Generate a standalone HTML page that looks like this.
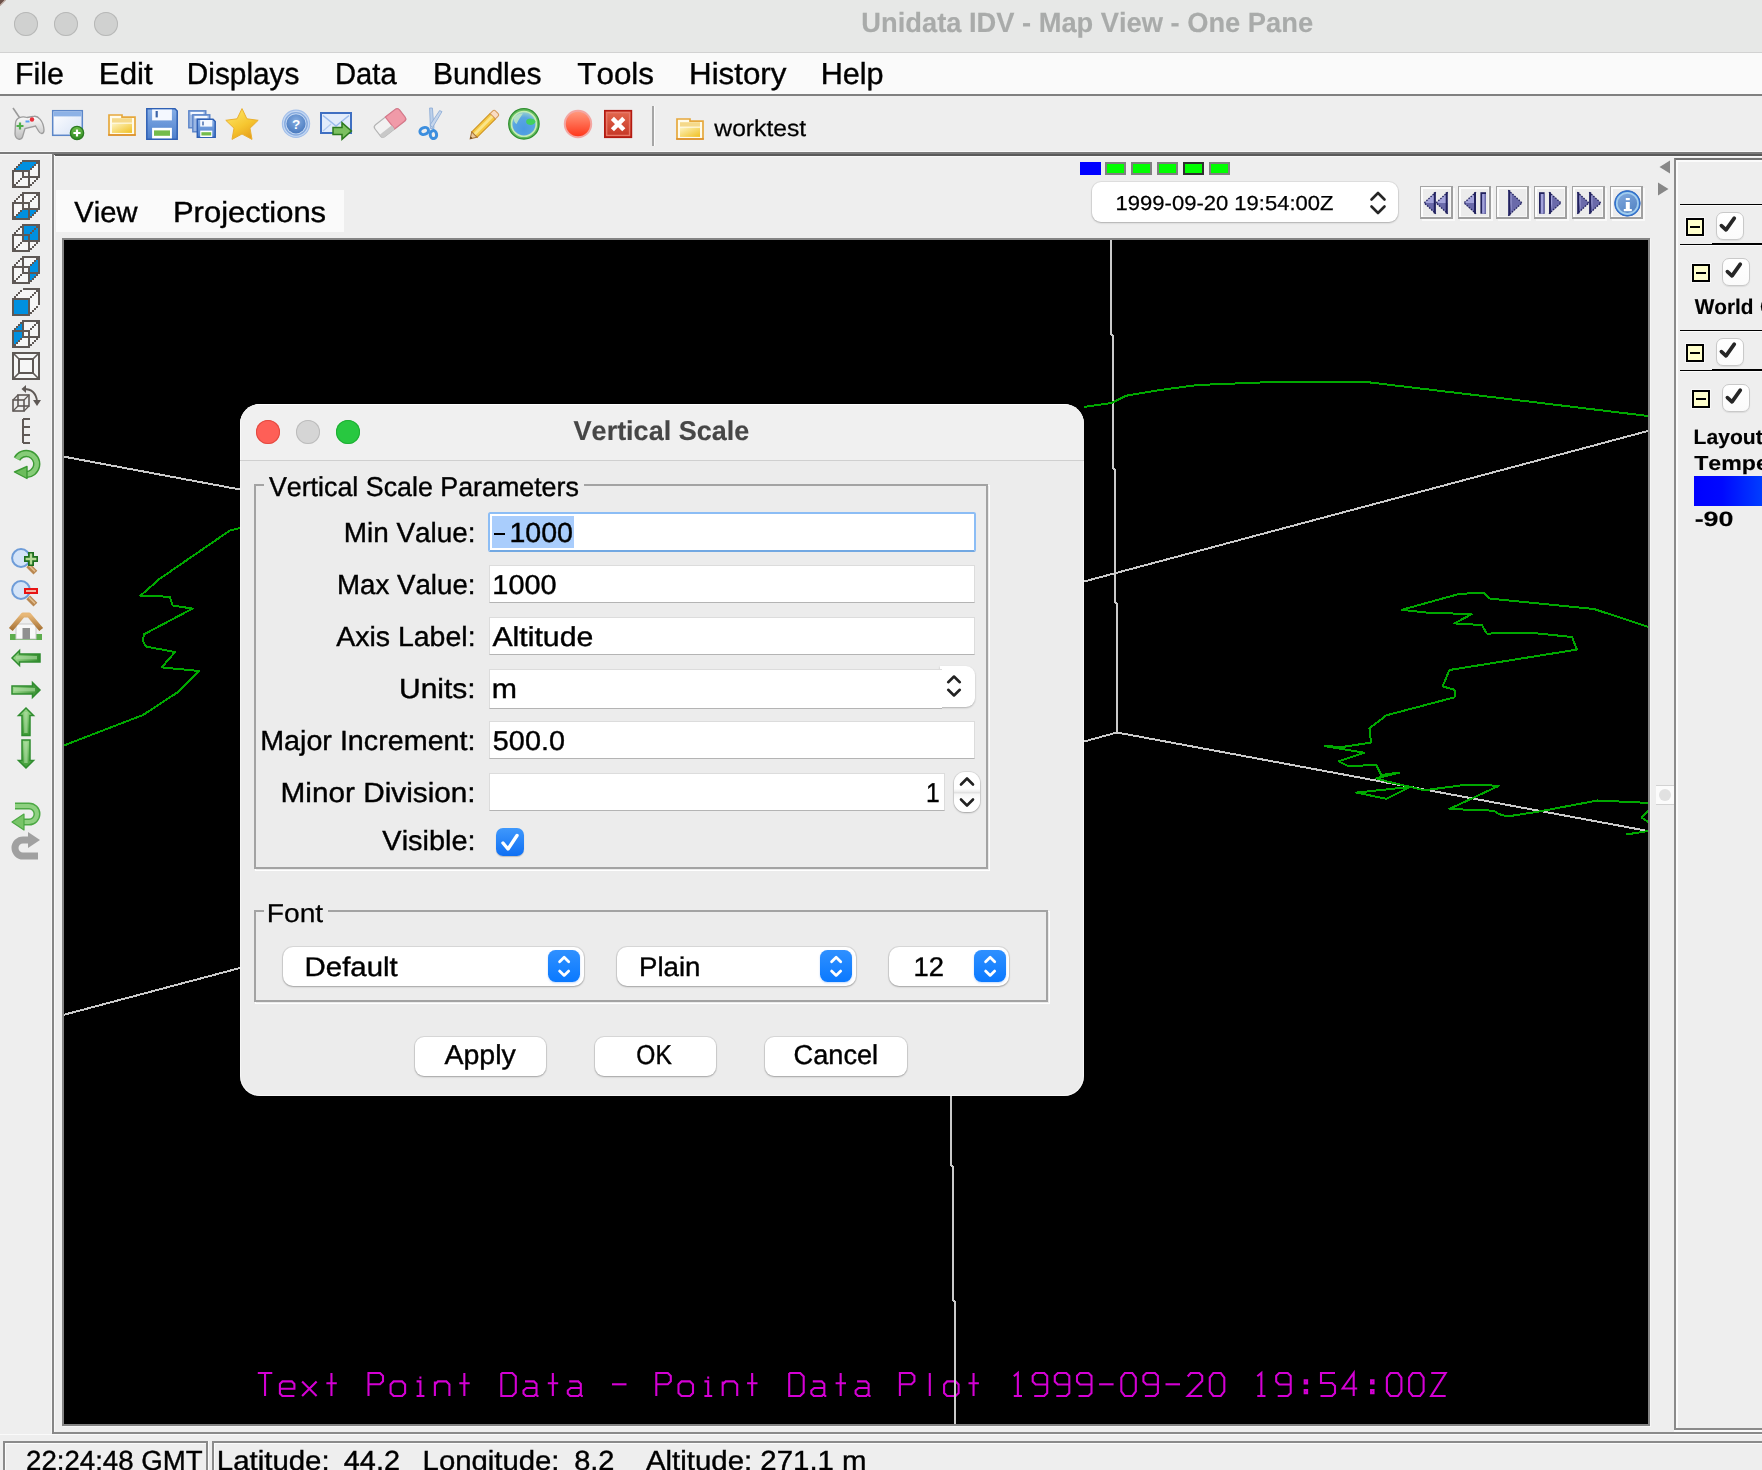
<!DOCTYPE html>
<html><head><meta charset="utf-8"><title>Unidata IDV</title><style>
html,body{margin:0;padding:0;}
body{width:1762px;height:1470px;overflow:hidden;background:#eeeeee;position:relative;font-family:"Liberation Sans",sans-serif;font-kerning:none;}
.a{position:absolute;}
.t{position:absolute;white-space:pre;line-height:1;transform-origin:0 0;will-change:transform;text-rendering:geometricPrecision;-webkit-text-stroke:0.4px currentColor;font-family:"Liberation Sans",sans-serif;}
svg{position:absolute;overflow:visible;}
.fld{position:absolute;background:#fff;border:1px solid #dcdcdc;border-bottom-color:#b4b4b4;box-sizing:border-box;}
.btn{position:absolute;background:#fff;border-radius:9px;box-shadow:0 0 0 1px rgba(0,0,0,.08),0 1px 2px rgba(0,0,0,.25);box-sizing:border-box;}
.blue{position:absolute;width:32px;height:32px;border-radius:7.5px;background:linear-gradient(#2f90ff,#0a79ff);box-shadow:0 1px 2px rgba(10,100,240,.25);}
.cb{position:absolute;width:27.5px;height:28px;border-radius:7px;background:linear-gradient(#fff,#fbfbfb);border:1px solid #c9c9c9;box-shadow:0 1px 1px rgba(0,0,0,.08);box-sizing:border-box;}
.col{position:absolute;width:18px;height:18px;background:#ffffcc;border:2px solid #000;box-sizing:border-box;box-shadow:0 0 0 1px #f8f8f8;}
.col:after{content:"";position:absolute;left:2px;top:6px;width:10px;height:2px;background:#000;}
.pb{position:absolute;width:33px;height:33px;box-sizing:border-box;border:1.5px solid #a4a4a4;border-right:2px solid #a0a0a0;border-bottom:2px solid #a0a0a0;box-shadow:inset 2px 2px 0 #fdfdfd, inset -1px -1px 0 #f6f6f6, 2px 2px 0 #f9f9f9;background:#ececec;}
</style></head><body>
<div class="a" style="left:0;top:0;width:1762px;height:52px;background:#e7e8e7;border-bottom:1px solid #d2d2d2;"></div>
<svg style="left:0;top:0" width="12" height="12"><path d="M0 0H6L0 6Z" fill="#6b5048"/><path d="M0 5.5L5.5 0" stroke="#c8b8b0" stroke-width="1.2"/></svg>
<div class="a" style="left:14px;top:12px;width:24px;height:24px;border-radius:50%;background:#d0d1d0;box-shadow:inset 0 0 0 1px #b7b8b7;"></div>
<div class="a" style="left:54px;top:12px;width:24px;height:24px;border-radius:50%;background:#d0d1d0;box-shadow:inset 0 0 0 1px #b7b8b7;"></div>
<div class="a" style="left:94px;top:12px;width:24px;height:24px;border-radius:50%;background:#d0d1d0;box-shadow:inset 0 0 0 1px #b7b8b7;"></div>

<div class="a" style="left:0;top:53px;width:1762px;height:41px;background:#fafafa;"></div>
<div class="a" style="left:0;top:94px;width:1762px;height:2px;background:#808080;"></div>








<div class="a" style="left:0;top:96px;width:1762px;height:56px;background:#eeeeee;"></div>
<div class="a" style="left:0;top:151px;width:1762px;height:1px;background:#f7f7f7;"></div>
<div class="a" style="left:0;top:152px;width:1762px;height:2px;background:#7b7b7b;"></div>
<div class="a" style="left:0;top:154px;width:52px;height:1px;background:#f7f7f7;"></div>
<div class="a" style="left:52px;top:154px;width:1710px;height:2px;background:#595959;"></div>
<div class="a" style="left:54px;top:156px;width:1708px;height:1px;background:#f7f7f7;"></div>
<svg style="left:0;top:0" width="900" height="160" viewBox="0 0 900 160"><defs>
<linearGradient id="gFold" x1="0" y1="0" x2="1" y2="1"><stop offset="0" stop-color="#fdf3c0"/><stop offset="1" stop-color="#f0c020"/></linearGradient>
<linearGradient id="gBlue" x1="0" y1="0" x2="0" y2="1"><stop offset="0" stop-color="#86aee6"/><stop offset="1" stop-color="#4d7fcc"/></linearGradient>
<linearGradient id="gWin" x1="0" y1="0" x2="1" y2="1"><stop offset="0" stop-color="#ffffff"/><stop offset="1" stop-color="#d6e2f6"/></linearGradient>
<linearGradient id="gStar" x1="0.2" y1="0" x2="0.8" y2="1"><stop offset="0" stop-color="#fde668"/><stop offset=".55" stop-color="#f6c630"/><stop offset="1" stop-color="#e49a18"/></linearGradient>
<linearGradient id="gRed" x1="0" y1="0" x2="0" y2="1"><stop offset="0" stop-color="#ff9c80"/><stop offset="1" stop-color="#ff3418"/></linearGradient><linearGradient id="gRedX" x1="0" y1="0" x2="0" y2="1"><stop offset="0" stop-color="#e46a50"/><stop offset="1" stop-color="#c43424"/></linearGradient>
<radialGradient id="gHelp" cx=".5" cy=".35" r=".7"><stop offset="0" stop-color="#86aee2"/><stop offset="1" stop-color="#4576bc"/></radialGradient>
<radialGradient id="gGlobe" cx=".5" cy=".7" r=".75"><stop offset="0" stop-color="#4a9ae2"/><stop offset=".6" stop-color="#5aa6e2"/><stop offset="1" stop-color="#a8dcc8"/></radialGradient>
<linearGradient id="gPad" x1="0" y1="0" x2="0" y2="1"><stop offset="0" stop-color="#fbfbfb"/><stop offset="1" stop-color="#bdbdbd"/></linearGradient>
<linearGradient id="gGreenBtn" x1="0" y1="0" x2="0" y2="1"><stop offset="0" stop-color="#6cc04a"/><stop offset="1" stop-color="#2f8a22"/></linearGradient>
</defs><g><path d="M13 108L20.5 119" stroke="#9a9a9a" stroke-width="1.6" fill="none"/><path d="M15.5 123C16 117.5 22 116 27 117.5L33 116.5C38 115 43.5 121 44 130C44 134.5 40.5 134.5 38.5 131L35.5 126L25 128.5L22.5 137C21.5 140.5 15.5 140 15 134Z" fill="url(#gPad)" stroke="#9c9c9c" stroke-width="1.3"/><path d="M20 122.5V129.5M16.5 126H23.5" stroke="#4fae4a" stroke-width="2.2"/><circle cx="32" cy="119.5" r="2.2" fill="#e8303a"/><rect x="25.5" y="120.5" width="4" height="2" fill="#5aa0f0"/></g><g><rect x="52.7" y="110.7" width="29.6" height="24.6" fill="url(#gWin)" stroke="#5b86c8" stroke-width="1.5"/><rect x="53.4" y="111.4" width="28.2" height="5" fill="#8db2e6"/><circle cx="77" cy="133" r="6.6" fill="url(#gGreenBtn)" stroke="#2b7a22" stroke-width="1.4"/><path d="M77 129.4V136.6M73.4 133H80.6" stroke="#fff" stroke-width="2.2"/></g><g><path d="M109.0 115.0H122.0V117.2H135.0V135.0H109.0Z" fill="#fffbea" stroke="#e6a83c" stroke-width="1.7"/><rect x="112.0" y="118.2" width="20.0" height="4.4" fill="#f5d98a"/><rect x="112.0" y="123.7" width="20.0" height="9.2" fill="url(#gFold)"/><path d="M108.2 135.0H135.8" stroke="#dc8a24" stroke-width="1.4"/></g><g><path d="M146.8 108.8H175.0L177.2 111.0V139.2H146.8Z" fill="url(#gBlue)" stroke="#2f60b4" stroke-width="1.5"/><rect x="152.1" y="109.5" width="19.8" height="10.9" fill="#f4f8ff"/><rect x="155.6" y="111.0" width="2.2" height="6.4" fill="#3c64a8"/><rect x="152.1" y="127.8" width="19.8" height="10.6" fill="#fff"/><rect x="154.0" y="130.4" width="16.0" height="5.4" fill="#74bc4c"/></g><g><rect x="188.8" y="110.8" width="17" height="17" fill="#9cb8e4" stroke="#5b84c8" stroke-width="1.4"/><rect x="190.5" y="112" width="13" height="2.6" fill="#f4f8ff"/><rect x="192.8" y="114.8" width="17" height="17" fill="#9cb8e4" stroke="#5b84c8" stroke-width="1.4"/><rect x="194.5" y="116" width="13" height="2.4" fill="#f4f8ff"/></g><g><path d="M197.3 119.3H213.0L215.2 121.5V137.2H197.3Z" fill="url(#gBlue)" stroke="#2f60b4" stroke-width="1.5"/><rect x="200.2" y="120.0" width="12.1" height="6.6" fill="#f4f8ff"/><rect x="202.3" y="121.5" width="1.4" height="3.9" fill="#3c64a8"/><rect x="200.2" y="130.6" width="12.1" height="6.4" fill="#fff"/><rect x="201.4" y="132.2" width="9.8" height="3.3" fill="#74bc4c"/></g><polygon points="242.0,108.6 246.9,118.8 258.2,120.3 250.0,128.2 252.0,139.4 242.0,134.0 232.0,139.4 234.0,128.2 225.8,120.3 237.1,118.8" fill="url(#gStar)" stroke="#eab030" stroke-width="1" stroke-linejoin="round"/><g><circle cx="296" cy="123.8" r="13.6" fill="#c6d9f3" stroke="#a4c0ea" stroke-width="1.2"/><circle cx="296" cy="123.8" r="11.2" fill="none" stroke="#86aade" stroke-width="1.4"/><circle cx="296" cy="123.8" r="9.6" fill="url(#gHelp)"/><text x="296" y="128.6" font-family="Liberation Sans" font-weight="bold" font-size="13.5" text-anchor="middle" fill="#fff">?</text></g><g><rect x="321" y="113" width="30" height="20" fill="#e2ecfb" stroke="#3f6fc2" stroke-width="2"/><path d="M323 115.5L336 126L349 115.5" fill="none" stroke="#9cbcec" stroke-width="1.6"/><path d="M323 131L331 124M349 131L341 124" fill="none" stroke="#b4ccf0" stroke-width="1.2"/><path d="M333 127.6H342V122.6L351.4 131L342 139.4V134.6H333Z" fill="#7cc060" stroke="#2c7a1e" stroke-width="1.5" stroke-linejoin="miter"/></g><g transform="rotate(-38 390 123)"><rect x="374.5" y="115.5" width="31" height="15" rx="3" fill="#f2f2f2" stroke="#b4b4b4" stroke-width="1.2"/><path d="M390 115.5H402.5A3 3 0 0 1 405.5 118.5V127.5A3 3 0 0 1 402.5 130.5H390Z" fill="#f09aa8" stroke="#d8788a" stroke-width="1.2"/><rect x="375" y="126" width="15" height="4.5" fill="#c8c8c8"/></g><g><path d="M429.6 108H432.4L434 128.5H430.4Z" fill="#bcd0ea" stroke="#88a8d4" stroke-width=".8"/><path d="M442 111.6L439.6 110.6L430 125L432.6 127.4Z" fill="#c6d6ec" stroke="#88a8d4" stroke-width=".8"/><ellipse cx="424.2" cy="131" rx="4.4" ry="3.4" fill="none" stroke="#3c8ede" stroke-width="3" transform="rotate(-20 424.2 131)"/><ellipse cx="433.4" cy="134.6" rx="3.2" ry="4" fill="none" stroke="#3c8ede" stroke-width="3" transform="rotate(-10 433.4 134.6)"/></g><g transform="rotate(-45 485 124)"><rect x="470" y="120.2" width="26" height="7.6" fill="#f5c842" stroke="#cf9422" stroke-width="1.1"/><rect x="470" y="122.4" width="26" height="2.8" fill="#fbe58a"/><path d="M470 120.2L464 124L470 127.8Z" fill="#eac79a" stroke="#a87434" stroke-width="1"/><path d="M466 122.7L464 124L466 125.3Z" fill="#5a3a1a"/><path d="M496 120.2H499.5A2.2 2.2 0 0 1 501.7 122.4V125.6A2.2 2.2 0 0 1 499.5 127.8H496Z" fill="#f9dcc4" stroke="#d49a5c" stroke-width="1"/></g><g><circle cx="523.9" cy="123.9" r="15.2" fill="#62bc5e" stroke="#2f8f2f" stroke-width="1.3"/><circle cx="523.9" cy="123.9" r="12.4" fill="url(#gGlobe)" stroke="#c6ecb4" stroke-width="1.6"/><path d="M527 119.5C530 117.5 534.5 118.5 535.5 121.5C535 124.5 531 125.5 528.5 124.5C526 124 525.5 121 527 119.5Z" fill="#42d05e"/><path d="M514 118C516 114.5 520 113 523 113.5C521 116.5 518.5 119.5 516.5 124C514.5 123 513.5 120.5 514 118Z" fill="#bfe8c4" opacity=".85"/></g><circle cx="578" cy="124" r="13.2" fill="url(#gRed)" stroke="#f3a6a2" stroke-width="2"/><g><rect x="604.8" y="110.7" width="26.6" height="26.6" fill="url(#gRedX)" stroke="#b21a12" stroke-width="1.6"/><rect x="606.7" y="112.6" width="22.8" height="22.8" fill="none" stroke="#e87868" stroke-width="1.3"/><path d="M612.4 118.4L623.8 129.8M623.8 118.4L612.4 129.8" stroke="#fff" stroke-width="4.4"/></g><g><path d="M677.0 119.0H690.0V121.2H703.0V139.0H677.0Z" fill="#fffbea" stroke="#e6a83c" stroke-width="1.7"/><rect x="680.0" y="122.2" width="20.0" height="4.4" fill="#f5d98a"/><rect x="680.0" y="127.7" width="20.0" height="9.2" fill="url(#gFold)"/><path d="M676.2 139.0H703.8" stroke="#dc8a24" stroke-width="1.4"/></g></svg>
<div class="a" style="left:652px;top:106px;width:2px;height:40px;background:#a6a6a6;border-right:1px solid #fbfbfb;"></div>

<div class="a" style="left:51px;top:155px;width:4px;height:1278px;background:#f7f7f7;"></div>
<div class="a" style="left:52px;top:154px;width:2px;height:1280px;background:#868686;"></div>
<svg style="left:0;top:0" width="54" height="900" viewBox="0 0 54 900"><defs><linearGradient id="gGr" x1="0" y1="0" x2="0" y2="1"><stop offset="0" stop-color="#9ad88a"/><stop offset="1" stop-color="#3c9a34"/></linearGradient>
<linearGradient id="gGrH" x1="0" y1="0" x2="1" y2="0"><stop offset="0" stop-color="#9ad88a"/><stop offset="1" stop-color="#2f8a2a"/></linearGradient>
<linearGradient id="gRoof" x1="0" y1="0" x2="0" y2="1"><stop offset="0" stop-color="#e8b878"/><stop offset="1" stop-color="#a87438"/></linearGradient></defs><g shape-rendering="crispEdges"><polygon points="13.0,171.0 23.0,161.0 39.0,161.0 39.0,177.0 29.0,187.0 13.0,187.0" fill="#f6f6f6"/><rect x="23.0" y="161.0" width="16" height="16" fill="none" stroke="#5e5855" stroke-width="2"/><polygon points="13.0,171.0 23.0,161.0 39.0,161.0 29.0,171.0" fill="#0090e0"/><path d="M22.0,161.0 L40.0,161.0" stroke="#5e5855" stroke-width="2"/><rect x="13.0" y="171.0" width="16" height="16" fill="none" stroke="#5e5855" stroke-width="2"/><rect x="14.0" y="168.0" width="2" height="2" fill="#5e5855"/><rect x="16.0" y="166.0" width="2" height="2" fill="#5e5855"/><rect x="18.0" y="164.0" width="2" height="2" fill="#5e5855"/><rect x="20.0" y="162.0" width="2" height="2" fill="#5e5855"/><rect x="30.0" y="168.0" width="2" height="2" fill="#5e5855"/><rect x="32.0" y="166.0" width="2" height="2" fill="#5e5855"/><rect x="34.0" y="164.0" width="2" height="2" fill="#5e5855"/><rect x="36.0" y="162.0" width="2" height="2" fill="#5e5855"/><rect x="14.0" y="184.0" width="2" height="2" fill="#5e5855"/><rect x="16.0" y="182.0" width="2" height="2" fill="#5e5855"/><rect x="18.0" y="180.0" width="2" height="2" fill="#5e5855"/><rect x="20.0" y="178.0" width="2" height="2" fill="#5e5855"/><rect x="30.0" y="184.0" width="2" height="2" fill="#5e5855"/><rect x="32.0" y="182.0" width="2" height="2" fill="#5e5855"/><rect x="34.0" y="180.0" width="2" height="2" fill="#5e5855"/><rect x="36.0" y="178.0" width="2" height="2" fill="#5e5855"/></g><g shape-rendering="crispEdges"><polygon points="13.0,203.0 23.0,193.0 39.0,193.0 39.0,209.0 29.0,219.0 13.0,219.0" fill="#f6f6f6"/><polygon points="13.0,219.0 23.0,209.0 39.0,209.0 29.0,219.0" fill="#0090e0"/><rect x="23.0" y="193.0" width="16" height="16" fill="none" stroke="#5e5855" stroke-width="2"/><rect x="13.0" y="203.0" width="16" height="16" fill="none" stroke="#5e5855" stroke-width="2"/><rect x="14.0" y="200.0" width="2" height="2" fill="#5e5855"/><rect x="16.0" y="198.0" width="2" height="2" fill="#5e5855"/><rect x="18.0" y="196.0" width="2" height="2" fill="#5e5855"/><rect x="20.0" y="194.0" width="2" height="2" fill="#5e5855"/><rect x="30.0" y="200.0" width="2" height="2" fill="#5e5855"/><rect x="32.0" y="198.0" width="2" height="2" fill="#5e5855"/><rect x="34.0" y="196.0" width="2" height="2" fill="#5e5855"/><rect x="36.0" y="194.0" width="2" height="2" fill="#5e5855"/><rect x="14.0" y="216.0" width="2" height="2" fill="#5e5855"/><rect x="16.0" y="214.0" width="2" height="2" fill="#5e5855"/><rect x="18.0" y="212.0" width="2" height="2" fill="#5e5855"/><rect x="20.0" y="210.0" width="2" height="2" fill="#5e5855"/><rect x="30.0" y="216.0" width="2" height="2" fill="#5e5855"/><rect x="32.0" y="214.0" width="2" height="2" fill="#5e5855"/><rect x="34.0" y="212.0" width="2" height="2" fill="#5e5855"/><rect x="36.0" y="210.0" width="2" height="2" fill="#5e5855"/></g><g shape-rendering="crispEdges"><polygon points="13.0,235.0 23.0,225.0 39.0,225.0 39.0,241.0 29.0,251.0 13.0,251.0" fill="#f6f6f6"/><polygon points="23.0,225.0 39.0,225.0 39.0,241.0 23.0,241.0" fill="#0090e0"/><rect x="23.0" y="225.0" width="16" height="16" fill="none" stroke="#5e5855" stroke-width="2"/><rect x="13.0" y="235.0" width="16" height="16" fill="none" stroke="#5e5855" stroke-width="2"/><rect x="14.0" y="232.0" width="2" height="2" fill="#5e5855"/><rect x="16.0" y="230.0" width="2" height="2" fill="#5e5855"/><rect x="18.0" y="228.0" width="2" height="2" fill="#5e5855"/><rect x="20.0" y="226.0" width="2" height="2" fill="#5e5855"/><rect x="30.0" y="232.0" width="2" height="2" fill="#5e5855"/><rect x="32.0" y="230.0" width="2" height="2" fill="#5e5855"/><rect x="34.0" y="228.0" width="2" height="2" fill="#5e5855"/><rect x="36.0" y="226.0" width="2" height="2" fill="#5e5855"/><rect x="14.0" y="248.0" width="2" height="2" fill="#5e5855"/><rect x="16.0" y="246.0" width="2" height="2" fill="#5e5855"/><rect x="18.0" y="244.0" width="2" height="2" fill="#5e5855"/><rect x="20.0" y="242.0" width="2" height="2" fill="#5e5855"/><rect x="30.0" y="248.0" width="2" height="2" fill="#5e5855"/><rect x="32.0" y="246.0" width="2" height="2" fill="#5e5855"/><rect x="34.0" y="244.0" width="2" height="2" fill="#5e5855"/><rect x="36.0" y="242.0" width="2" height="2" fill="#5e5855"/></g><g shape-rendering="crispEdges"><polygon points="13.0,267.0 23.0,257.0 39.0,257.0 39.0,273.0 29.0,283.0 13.0,283.0" fill="#f6f6f6"/><polygon points="29.0,267.0 39.0,257.0 39.0,273.0 29.0,283.0" fill="#0090e0"/><rect x="23.0" y="257.0" width="16" height="16" fill="none" stroke="#5e5855" stroke-width="2"/><rect x="13.0" y="267.0" width="16" height="16" fill="none" stroke="#5e5855" stroke-width="2"/><rect x="14.0" y="264.0" width="2" height="2" fill="#5e5855"/><rect x="16.0" y="262.0" width="2" height="2" fill="#5e5855"/><rect x="18.0" y="260.0" width="2" height="2" fill="#5e5855"/><rect x="20.0" y="258.0" width="2" height="2" fill="#5e5855"/><rect x="30.0" y="264.0" width="2" height="2" fill="#5e5855"/><rect x="32.0" y="262.0" width="2" height="2" fill="#5e5855"/><rect x="34.0" y="260.0" width="2" height="2" fill="#5e5855"/><rect x="36.0" y="258.0" width="2" height="2" fill="#5e5855"/><rect x="14.0" y="280.0" width="2" height="2" fill="#5e5855"/><rect x="16.0" y="278.0" width="2" height="2" fill="#5e5855"/><rect x="18.0" y="276.0" width="2" height="2" fill="#5e5855"/><rect x="20.0" y="274.0" width="2" height="2" fill="#5e5855"/><rect x="30.0" y="280.0" width="2" height="2" fill="#5e5855"/><rect x="32.0" y="278.0" width="2" height="2" fill="#5e5855"/><rect x="34.0" y="276.0" width="2" height="2" fill="#5e5855"/><rect x="36.0" y="274.0" width="2" height="2" fill="#5e5855"/></g><g shape-rendering="crispEdges"><polygon points="13.0,299.0 23.0,289.0 39.0,289.0 39.0,305.0 29.0,315.0 13.0,315.0" fill="#f6f6f6"/><polygon points="13.0,299.0 29.0,299.0 29.0,315.0 13.0,315.0" fill="#0090e0"/><path d="M23.0,289.0 L39.0,289.0 L39.0,305.0" fill="none" stroke="#5e5855" stroke-width="2"/><rect x="13.0" y="299.0" width="16" height="16" fill="none" stroke="#5e5855" stroke-width="2"/><rect x="14.0" y="296.0" width="2" height="2" fill="#5e5855"/><rect x="16.0" y="294.0" width="2" height="2" fill="#5e5855"/><rect x="18.0" y="292.0" width="2" height="2" fill="#5e5855"/><rect x="20.0" y="290.0" width="2" height="2" fill="#5e5855"/><rect x="30.0" y="296.0" width="2" height="2" fill="#5e5855"/><rect x="32.0" y="294.0" width="2" height="2" fill="#5e5855"/><rect x="34.0" y="292.0" width="2" height="2" fill="#5e5855"/><rect x="36.0" y="290.0" width="2" height="2" fill="#5e5855"/><rect x="30.0" y="312.0" width="2" height="2" fill="#5e5855"/><rect x="32.0" y="310.0" width="2" height="2" fill="#5e5855"/><rect x="34.0" y="308.0" width="2" height="2" fill="#5e5855"/><rect x="36.0" y="306.0" width="2" height="2" fill="#5e5855"/></g><g shape-rendering="crispEdges"><polygon points="13.0,331.0 23.0,321.0 39.0,321.0 39.0,337.0 29.0,347.0 13.0,347.0" fill="#f6f6f6"/><polygon points="13.0,331.0 23.0,321.0 23.0,337.0 13.0,347.0" fill="#0090e0"/><rect x="23.0" y="321.0" width="16" height="16" fill="none" stroke="#5e5855" stroke-width="2"/><rect x="13.0" y="331.0" width="16" height="16" fill="none" stroke="#5e5855" stroke-width="2"/><rect x="14.0" y="328.0" width="2" height="2" fill="#5e5855"/><rect x="16.0" y="326.0" width="2" height="2" fill="#5e5855"/><rect x="18.0" y="324.0" width="2" height="2" fill="#5e5855"/><rect x="20.0" y="322.0" width="2" height="2" fill="#5e5855"/><rect x="30.0" y="328.0" width="2" height="2" fill="#5e5855"/><rect x="32.0" y="326.0" width="2" height="2" fill="#5e5855"/><rect x="34.0" y="324.0" width="2" height="2" fill="#5e5855"/><rect x="36.0" y="322.0" width="2" height="2" fill="#5e5855"/><rect x="14.0" y="344.0" width="2" height="2" fill="#5e5855"/><rect x="16.0" y="342.0" width="2" height="2" fill="#5e5855"/><rect x="18.0" y="340.0" width="2" height="2" fill="#5e5855"/><rect x="20.0" y="338.0" width="2" height="2" fill="#5e5855"/><rect x="30.0" y="344.0" width="2" height="2" fill="#5e5855"/><rect x="32.0" y="342.0" width="2" height="2" fill="#5e5855"/><rect x="34.0" y="340.0" width="2" height="2" fill="#5e5855"/><rect x="36.0" y="338.0" width="2" height="2" fill="#5e5855"/></g><g fill="none" stroke="#5e5855" stroke-width="2"><rect x="13" y="353" width="26" height="26" fill="#f6f6f6"/><rect x="19" y="359" width="14" height="14"/><path d="M13 353L19 359M39 353L33 359M13 379L19 373M39 379L33 373" stroke-width="1.6"/></g><g fill="none" stroke="#5e5855" stroke-width="1.6"><rect x="13" y="400" width="11" height="11"/><rect x="18" y="395" width="11" height="11"/><path d="M13 400L18 395M24 400L29 395M13 411L18 406M24 411L29 406" stroke-width="1.3"/><path d="M24 389C31 389 36 393 37 401" stroke-width="1.8"/><path d="M21.5 389L26 385L26 393Z" fill="#5e5855" stroke="none"/><path d="M33 400H41L37 406Z" fill="#5e5855" stroke="none"/></g><path d="M23 419V443M23 419H30M23 427H30M23 435H30M23 443H30" fill="none" stroke="#5e5855" stroke-width="2"/><g><path d="M17 459A10.5 10.5 0 1 1 26 474.5" fill="none" stroke="#3c9a34" stroke-width="7.4" stroke-linecap="butt"/><path d="M17 459A10.5 10.5 0 1 1 26 474.5" fill="none" stroke="#86cc78" stroke-width="4.6"/><path d="M27 466.5L14.5 472L27 478.5Z" fill="#6cbc5c" stroke="#3c9a34" stroke-width="1.4" stroke-linejoin="round"/></g><g><path d="M28.2 565.4L35.4 572.6" stroke="#b98750" stroke-width="5.4" stroke-linecap="butt"/><path d="M29 565.4L35 571.4" stroke="#e2bc8c" stroke-width="1.6"/><circle cx="21" cy="558" r="8.9" fill="#d4e4f8" stroke="#6e9cd8" stroke-width="2"/><path d="M31 552V566M24 559H38" stroke="#1f6f1f" stroke-width="6"/><path d="M31 553.6V564.4M25.6 559H36.4" stroke="#b6da96" stroke-width="2.4"/></g><g><path d="M28.2 597.4L35.4 604.6" stroke="#b98750" stroke-width="5.4" stroke-linecap="butt"/><path d="M29 597.4L35 603.4" stroke="#e2bc8c" stroke-width="1.6"/><circle cx="21" cy="590" r="8.9" fill="#d4e4f8" stroke="#6e9cd8" stroke-width="2"/><rect x="25" y="589" width="12" height="4" fill="#f2b6a4" stroke="#e81414" stroke-width="2"/></g><g><rect x="10" y="634" width="32" height="6" fill="#5cac4c"/><rect x="16" y="624" width="20" height="15" fill="#f8f8f8" stroke="#c8c8c8" stroke-width="1"/><rect x="22.5" y="628" width="7.5" height="11" fill="#909090"/><path d="M10.8 629.5L23 615H29L41.2 629.5" fill="none" stroke="url(#gRoof)" stroke-width="5" stroke-linejoin="round"/></g><path d="M12 658L19.5 650.5V654H40V662H19.5V665.5Z" fill="url(#gGrH)" stroke="#2f8c2f" stroke-width="1.5" stroke-linejoin="miter"/><rect x="16" y="656" width="21" height="3.4" fill="#b4e0a8" opacity=".6"/><path d="M40 690L32.5 682.5V686H12V694H32.5V697.5Z" fill="url(#gGrH)" stroke="#2f8c2f" stroke-width="1.5" stroke-linejoin="miter"/><rect x="14" y="688" width="21" height="3.4" fill="#b4e0a8" opacity=".6"/><path d="M26 708L18.5 715.5H22V735.5H30V715.5H33.5Z" fill="url(#gGr)" stroke="#2f8c2f" stroke-width="1.5" stroke-linejoin="miter"/><rect x="24.2" y="712" width="3.4" height="21" fill="#b4e0a8" opacity=".6"/><path d="M26 768L18.5 760.5H22V740H30V760.5H33.5Z" fill="url(#gGr)" stroke="#2f8c2f" stroke-width="1.5" stroke-linejoin="miter"/><rect x="24.2" y="742" width="3.4" height="21" fill="#b4e0a8" opacity=".6"/><g><path d="M15 806H29A8 8 0 0 1 29 822H22" fill="none" stroke="#4ca844" stroke-width="7"/><path d="M15 806H29A8 8 0 0 1 29 822H22" fill="none" stroke="#8ed080" stroke-width="4.2"/><path d="M24 814L12 822L24 830Z" fill="#78c468" stroke="#4ca844" stroke-width="1.2" stroke-linejoin="round"/></g><g><path d="M38 856H23A8 8 0 0 1 23 840H30" fill="none" stroke="#a0a0a0" stroke-width="7"/><path d="M28 832L40 840L28 848Z" fill="#a0a0a0"/></g></svg>
<div class="a" style="left:56px;top:190px;width:288px;height:42px;background:#fafafa;"></div>


<div class="a" style="left:1080px;top:162px;width:21px;height:13px;background:#0000ff;"></div>
<div class="a" style="left:1105px;top:162px;width:21px;height:13px;background:#00ff00;box-sizing:border-box;border:2px solid #808080;"></div>
<div class="a" style="left:1131px;top:162px;width:21px;height:13px;background:#00ff00;box-sizing:border-box;border:2px solid #808080;"></div>
<div class="a" style="left:1157px;top:162px;width:21px;height:13px;background:#00ff00;box-sizing:border-box;border:2px solid #808080;"></div>
<div class="a" style="left:1183px;top:162px;width:21px;height:13px;background:#00ff00;box-sizing:border-box;border:2px solid #303030;"></div>
<div class="a" style="left:1209px;top:162px;width:21px;height:13px;background:#00ff00;box-sizing:border-box;border:2px solid #808080;"></div>
<div class="a" style="left:1092px;top:182px;width:306px;height:40px;background:#fff;border-radius:9px;box-shadow:0 0 0 1px rgba(0,0,0,.06),0 1px 2px rgba(0,0,0,.22);"></div>

<svg style="left:1369px;top:190px" width="18" height="26"><path d="M2.5 9.5L9 3L15.5 9.5M2.5 16.5L9 23L15.5 16.5" fill="none" stroke="#262626" stroke-width="2.6" stroke-linecap="round" stroke-linejoin="round"/></svg>
<div class="pb" style="left:1420px;top:186px"></div><div class="pb" style="left:1458px;top:186px"></div><div class="pb" style="left:1496px;top:186px"></div><div class="pb" style="left:1534px;top:186px"></div><div class="pb" style="left:1572px;top:186px"></div><div class="pb" style="left:1610px;top:186px"></div><svg style="left:0;top:0" width="1762" height="260" viewBox="0 0 1762 260"><defs><linearGradient id="gInfo" x1="0" y1="0" x2="0.6" y2="1"><stop offset="0" stop-color="#82aae0"/><stop offset="1" stop-color="#5686c4"/></linearGradient></defs><path d="M1435.8 192.2L1424.2 202.9L1435.8 202.9Z" fill="#a2a2da"/><path d="M1435.8 202.9L1424.2 202.9L1435.8 213.7Z" fill="#6a6aaa"/><path d="M1435.8 192.2L1424.2 202.9L1435.8 213.7" fill="none" stroke="#22225e" stroke-width="1.3" stroke-dasharray="1.6 1.2"/><path d="M1434.8 192.2V213.7" stroke="#22225e" stroke-width="2"/><path d="M1447.7 192.2L1436.1 202.9L1447.7 202.9Z" fill="#a2a2da"/><path d="M1447.7 202.9L1436.1 202.9L1447.7 213.7Z" fill="#6a6aaa"/><path d="M1447.7 192.2L1436.1 202.9L1447.7 213.7" fill="none" stroke="#22225e" stroke-width="1.3" stroke-dasharray="1.6 1.2"/><path d="M1446.7 192.2V213.7" stroke="#22225e" stroke-width="2"/><path d="M1476.0 192.2L1464.0 202.9L1476.0 202.9Z" fill="#a2a2da"/><path d="M1476.0 202.9L1464.0 202.9L1476.0 213.7Z" fill="#6a6aaa"/><path d="M1476.0 192.2L1464.0 202.9L1476.0 213.7" fill="none" stroke="#22225e" stroke-width="1.3" stroke-dasharray="1.6 1.2"/><path d="M1475.0 192.2V213.7" stroke="#22225e" stroke-width="2"/><rect x="1480.4" y="192.2" width="5.6" height="21.5" fill="#22225e"/><rect x="1482.2" y="194.0" width="3.8" height="19.7" fill="#6a6aaa"/><rect x="1482.2" y="194.0" width="2.3" height="19.7" fill="#a2a2da"/><path d="M1508.3 190.2L1522.0 202.9L1508.3 215.7Z" fill="#6a6aaa"/><path d="M1508.3 190.2L1511.5 193.2L1511.5 212.7Z" fill="#a2a2da"/><path d="M1508.3 190.2L1522.0 202.9L1508.3 215.7" fill="none" stroke="#22225e" stroke-width="1.3" stroke-dasharray="1.6 1.2"/><path d="M1509.3 190.2V215.7" stroke="#22225e" stroke-width="2"/><rect x="1539.0" y="192.2" width="5.6" height="21.5" fill="#22225e"/><rect x="1540.8" y="194.0" width="3.8" height="19.7" fill="#6a6aaa"/><rect x="1540.8" y="194.0" width="2.3" height="19.7" fill="#a2a2da"/><path d="M1549.0 192.2L1561.0 202.9L1549.0 213.7Z" fill="#6a6aaa"/><path d="M1549.0 192.2L1552.2 195.2L1552.2 210.7Z" fill="#a2a2da"/><path d="M1549.0 192.2L1561.0 202.9L1549.0 213.7" fill="none" stroke="#22225e" stroke-width="1.3" stroke-dasharray="1.6 1.2"/><path d="M1550.0 192.2V213.7" stroke="#22225e" stroke-width="2"/><path d="M1577.3 192.2L1588.9 202.9L1577.3 213.7Z" fill="#6a6aaa"/><path d="M1577.3 192.2L1580.5 195.2L1580.5 210.7Z" fill="#a2a2da"/><path d="M1577.3 192.2L1588.9 202.9L1577.3 213.7" fill="none" stroke="#22225e" stroke-width="1.3" stroke-dasharray="1.6 1.2"/><path d="M1578.3 192.2V213.7" stroke="#22225e" stroke-width="2"/><path d="M1589.2 192.2L1600.8 202.9L1589.2 213.7Z" fill="#6a6aaa"/><path d="M1589.2 192.2L1592.4 195.2L1592.4 210.7Z" fill="#a2a2da"/><path d="M1589.2 192.2L1600.8 202.9L1589.2 213.7" fill="none" stroke="#22225e" stroke-width="1.3" stroke-dasharray="1.6 1.2"/><path d="M1590.2 192.2V213.7" stroke="#22225e" stroke-width="2"/><circle cx="1627.4" cy="203.4" r="12.8" fill="#2e78d4" stroke="#3a6cc0" stroke-width="1"/><path d="M1640.2 203.4A12.8 12.8 0 0 0 1627.4 216.2A14.5 14.5 0 0 1 1640.2 203.4Z" fill="#2a4aa2" opacity=".7"/><circle cx="1627.4" cy="203.4" r="10.6" fill="url(#gInfo)" stroke="#a2cdee" stroke-width="1.8"/><rect x="1625.8" y="198" width="4" height="2.2" fill="#fff"/><rect x="1625.8" y="202" width="4" height="7.4" fill="#fff"/><rect x="1623.8" y="209" width="8" height="2.2" fill="#fff"/></svg>
<svg style="left:1657px;top:158px" width="14" height="40"><path d="M13 2.5V15.5L2.5 9Z" fill="#878787"/><path d="M1 24.5V37.5L11.5 31Z" fill="#878787"/></svg>
<div class="a" style="left:1656px;top:785px;width:18px;height:20px;background:#fbfbfb;box-sizing:border-box;border-top:1.5px solid #d2d2d2;border-bottom:1.5px solid #d2d2d2;"></div><div class="a" style="left:1659px;top:789px;width:12px;height:12px;border-radius:50%;background:#e1e1e1;"></div>
<div class="a" style="left:62px;top:238px;width:1588px;height:1188px;background:#000;border:2px solid #848484;box-sizing:border-box;box-shadow:1px 1px 0 #f6f6f6;"></div>
<svg style="left:0;top:0" width="1762" height="1470" viewBox="0 0 1762 1470"><defs><clipPath id="mc"><rect x="64" y="240" width="1584" height="1184"/></clipPath></defs><g clip-path="url(#mc)" fill="none" stroke-linejoin="round" shape-rendering="crispEdges"><g shape-rendering="geometricPrecision"><g fill="none" stroke="#d400d4" stroke-width="2.1" stroke-linejoin="miter" stroke-linecap="butt"><path transform="translate(257.8 1373.0)" d="M0 0H14.5M7.25 0V23"/><path transform="translate(279.9 1373.0)" d="M0 15.7H14.5V11L12 8.4H2.5L0 11V20.5L2.5 23H14.5"/><path transform="translate(302.1 1373.0)" d="M0 8.4L14.5 23M14.5 8.4L0 23"/><path transform="translate(324.2 1373.0)" d="M7.25 0V23M2.2 10.2H12.6"/><path transform="translate(368.5 1373.0)" d="M0 23V0H11.5L14.5 3V8.3L11.5 11.3H0"/><path transform="translate(390.6 1373.0)" d="M3 8.4H11.5L14.5 11.4V20L11.5 23H3L0 20V11.4Z"/><path transform="translate(412.8 1373.0)" d="M3.8 8.4H7.6V23M3.8 23H11.6M6.6 4.6H8.6"/><path transform="translate(434.9 1373.0)" d="M0 8.4V23M0 11.4L3 8.4H11.5L14.5 11.4V23"/><path transform="translate(457.1 1373.0)" d="M7.25 0V23M2.2 10.2H12.6"/><path transform="translate(501.3 1373.0)" d="M0 0V23H11L14.5 19.5V3.5L11 0H0"/><path transform="translate(523.5 1373.0)" d="M1.5 8.4H10.5L13 10.9V23M13 15H3L0 17.5V20.5L2.5 23H10.5L13 20.5M13 23H15"/><path transform="translate(545.6 1373.0)" d="M7.25 0V23M2.2 10.2H12.6"/><path transform="translate(567.8 1373.0)" d="M1.5 8.4H10.5L13 10.9V23M13 15H3L0 17.5V20.5L2.5 23H10.5L13 20.5M13 23H15"/><path transform="translate(612.0 1373.0)" d="M0 11.3H14.5"/><path transform="translate(656.3 1373.0)" d="M0 23V0H11.5L14.5 3V8.3L11.5 11.3H0"/><path transform="translate(678.5 1373.0)" d="M3 8.4H11.5L14.5 11.4V20L11.5 23H3L0 20V11.4Z"/><path transform="translate(700.6 1373.0)" d="M3.8 8.4H7.6V23M3.8 23H11.6M6.6 4.6H8.6"/><path transform="translate(722.7 1373.0)" d="M0 8.4V23M0 11.4L3 8.4H11.5L14.5 11.4V23"/><path transform="translate(744.9 1373.0)" d="M7.25 0V23M2.2 10.2H12.6"/><path transform="translate(789.2 1373.0)" d="M0 0V23H11L14.5 19.5V3.5L11 0H0"/><path transform="translate(811.3 1373.0)" d="M1.5 8.4H10.5L13 10.9V23M13 15H3L0 17.5V20.5L2.5 23H10.5L13 20.5M13 23H15"/><path transform="translate(833.4 1373.0)" d="M7.25 0V23M2.2 10.2H12.6"/><path transform="translate(855.6 1373.0)" d="M1.5 8.4H10.5L13 10.9V23M13 15H3L0 17.5V20.5L2.5 23H10.5L13 20.5M13 23H15"/><path transform="translate(899.9 1373.0)" d="M0 23V0H11.5L14.5 3V8.3L11.5 11.3H0"/><path transform="translate(922.0 1373.0)" d="M7.8 0V23"/><path transform="translate(944.1 1373.0)" d="M3 8.4H11.5L14.5 11.4V20L11.5 23H3L0 20V11.4Z"/><path transform="translate(966.3 1373.0)" d="M7.25 0V23M2.2 10.2H12.6"/><path transform="translate(1010.6 1373.0)" d="M3.2 3.2L7.25 0V23M3.2 23H11.4"/><path transform="translate(1032.7 1373.0)" d="M14.5 11.5H3L0 8.5V3L3 0H11.5L14.5 3V20L11.5 23H1.5"/><path transform="translate(1054.8 1373.0)" d="M14.5 11.5H3L0 8.5V3L3 0H11.5L14.5 3V20L11.5 23H1.5"/><path transform="translate(1077.0 1373.0)" d="M14.5 11.5H3L0 8.5V3L3 0H11.5L14.5 3V20L11.5 23H1.5"/><path transform="translate(1099.1 1373.0)" d="M0 11.3H14.5"/><path transform="translate(1121.3 1373.0)" d="M3.5 0H11L14.5 4.5V18.5L11 23H3.5L0 18.5V4.5Z"/><path transform="translate(1143.4 1373.0)" d="M14.5 11.5H3L0 8.5V3L3 0H11.5L14.5 3V20L11.5 23H1.5"/><path transform="translate(1165.5 1373.0)" d="M0 11.3H14.5"/><path transform="translate(1187.7 1373.0)" d="M0 3.5L3 0H11.5L14.5 3V8L0 23H14.5"/><path transform="translate(1209.8 1373.0)" d="M3.5 0H11L14.5 4.5V18.5L11 23H3.5L0 18.5V4.5Z"/><path transform="translate(1254.1 1373.0)" d="M3.2 3.2L7.25 0V23M3.2 23H11.4"/><path transform="translate(1276.2 1373.0)" d="M14.5 11.5H3L0 8.5V3L3 0H11.5L14.5 3V20L11.5 23H1.5"/><path transform="translate(1298.4 1373.0)" d="M6.3 7.2H8.7V10.4H6.3ZM6.3 17H8.7V20.2H6.3Z"/><path transform="translate(1320.5 1373.0)" d="M14.5 0H0.5V10H11.5L14.5 13V20L11.5 23H0"/><path transform="translate(1342.7 1373.0)" d="M11 23V0L0 15.5H14.5"/><path transform="translate(1364.8 1373.0)" d="M6.3 7.2H8.7V10.4H6.3ZM6.3 17H8.7V20.2H6.3Z"/><path transform="translate(1386.9 1373.0)" d="M3.5 0H11L14.5 4.5V18.5L11 23H3.5L0 18.5V4.5Z"/><path transform="translate(1409.1 1373.0)" d="M3.5 0H11L14.5 4.5V18.5L11 23H3.5L0 18.5V4.5Z"/><path transform="translate(1431.2 1373.0)" d="M0 0H14.5L0 23H14.5"/></g></g><g stroke="#cacaca" stroke-width="2"><path d="M63 456.5L240 489.5"/><path d="M63 1015L240 968"/><path d="M1111 239V334L1113 336V468L1115 470V602L1117 604V732"/><path d="M1084 741.5L1117 732.5L1648 831"/><path d="M1084 581.5L1648 431"/><path d="M951 1096V1165L953 1167V1300L955 1302V1424"/></g><g stroke="#00a800" stroke-width="2"><path d="M1084 407L1111.8 403L1125.7 395.8L1160 390L1197.5 385L1265 382.3L1368.8 382.3L1398.6 385.9L1498 397.8L1648 416"/><path d="M240 528L230 530.4L159.4 579L140.4 595.8L169.6 596.7L172.7 605.5L192.6 608.6L144 634.3L142.7 640.9L146.2 646.6L175 652L161.7 667.4L199.2 671L178.5 691.7L143 715L63.5 745.6"/><path d="M1648 626.8L1594 609L1490 598.6L1483.5 592.8L1459.6 593.8L1401.8 609.8L1425.6 612.5L1471.6 614.2L1454.5 623.4L1481.8 625L1486.9 633.6L1529.4 632.6L1572 637L1577 649.6L1449.4 670L1442.6 686.4L1454.5 689.8L1454.5 697.3L1386.4 715.3L1369.4 728.3L1371 742.6L1342.2 747L1324.5 746L1364.3 752.8L1338.8 761.3L1349 766.4L1376.2 764.7L1381.3 775L1399.4 772.6L1376.2 778.3L1388 781.7L1410.3 786.9L1386.4 798.8L1356.5 792.6L1410.3 786.9L1423.9 790.3L1468 784.5L1498.8 785.8L1449.4 809L1493.7 810.7L1498.8 814L1507.3 816.5L1539.6 811.4L1597.5 800.5L1648 802.9"/><path d="M1648 810.7L1641.8 817.5L1648 822M1626.5 834.5L1648 831"/></g></g></svg>
<div class="a" style="left:1674px;top:158px;width:100px;height:1272px;border:2px solid #8a8a8a;border-top-color:#727272;border-right:none;box-sizing:border-box;"></div>
<div class="a" style="left:1676px;top:160px;width:100px;height:1268px;border:2px solid #fbfbfb;border-right:none;border-bottom:none;box-sizing:border-box;"></div>
<div class="a" style="left:1680px;top:204px;width:90px;height:1px;background:#000;border-bottom:1.5px solid #fbfbfb;"></div>
<div class="a" style="left:1680px;top:244px;width:90px;height:1px;background:#000;border-bottom:1.5px solid #fbfbfb;"></div>
<div class="a" style="left:1712px;top:243px;width:60px;height:2px;background:#000;"></div>
<div class="a" style="left:1680px;top:330px;width:90px;height:1px;background:#000;border-bottom:1.5px solid #fbfbfb;"></div>
<div class="a" style="left:1680px;top:370px;width:90px;height:1px;background:#000;border-bottom:1.5px solid #fbfbfb;"></div>
<div class="a" style="left:1712px;top:369px;width:60px;height:2px;background:#000;"></div>
<div class="col" style="left:1686px;top:218px"></div>
<div class="cb" style="left:1716.0px;top:212.0px"><svg style="left:-2.6px;top:-2.8px" width="28" height="28"><path d="M7.4 15.6L12 19.8L20.3 8.2" fill="none" stroke="#262626" stroke-width="3.7" stroke-linecap="round" stroke-linejoin="round"/></svg></div>
<div class="col" style="left:1692px;top:264px"></div>
<div class="cb" style="left:1722.0px;top:258.0px"><svg style="left:-2.6px;top:-2.8px" width="28" height="28"><path d="M7.4 15.6L12 19.8L20.3 8.2" fill="none" stroke="#262626" stroke-width="3.7" stroke-linecap="round" stroke-linejoin="round"/></svg></div>
<div class="col" style="left:1686px;top:344px"></div>
<div class="cb" style="left:1716.0px;top:338.0px"><svg style="left:-2.6px;top:-2.8px" width="28" height="28"><path d="M7.4 15.6L12 19.8L20.3 8.2" fill="none" stroke="#262626" stroke-width="3.7" stroke-linecap="round" stroke-linejoin="round"/></svg></div>
<div class="col" style="left:1692px;top:390px"></div>
<div class="cb" style="left:1722.0px;top:384.0px"><svg style="left:-2.6px;top:-2.8px" width="28" height="28"><path d="M7.4 15.6L12 19.8L20.3 8.2" fill="none" stroke="#262626" stroke-width="3.7" stroke-linecap="round" stroke-linejoin="round"/></svg></div>




<div class="a" style="left:1694px;top:476px;width:70px;height:30px;background:linear-gradient(90deg,#0000ff,#0008ff 40%,#0040ff);"></div>

<div class="a" style="left:1674px;top:1430px;width:100px;height:2px;background:#fbfbfb;"></div>
<div class="a" style="left:54px;top:1432px;width:1708px;height:2px;background:#8a8a8a;"></div>
<div class="a" style="left:0;top:1434px;width:1762px;height:1px;background:#fafafa;"></div>
<div class="a" style="left:3px;top:1441px;width:205px;height:40px;border:2px solid #8a8a8a;box-sizing:border-box;box-shadow:inset 1px 1px 0 #fbfbfb, 1px 0 0 #fbfbfb;"></div>
<div class="a" style="left:212px;top:1441px;width:1600px;height:40px;border:2px solid #8a8a8a;box-sizing:border-box;box-shadow:inset 1px 1px 0 #fbfbfb, 1px 0 0 #fbfbfb;"></div>






<div class="a" style="left:240px;top:404px;width:844px;height:692px;border-radius:20px;background:#ececec;overflow:hidden;box-shadow:inset 0 0 0 1px rgba(255,255,255,.6);"><div class="a" style="left:0;top:0;width:844px;height:56px;background:#f0f0f0;border-bottom:1px solid #cfcfcf;box-shadow:inset 0 1px 0 rgba(255,255,255,.8), inset 1px 0 0 rgba(255,255,255,.6);"></div></div>
<div class="a" style="left:256px;top:420px;width:24px;height:24px;border-radius:50%;background:#fe5f57;box-shadow:inset 0 0 0 1px #e24b41;"></div>
<div class="a" style="left:296px;top:420px;width:24px;height:24px;border-radius:50%;background:#d5d5d5;box-shadow:inset 0 0 0 1px #bcbcbc;"></div>
<div class="a" style="left:336px;top:420px;width:24px;height:24px;border-radius:50%;background:#28c840;box-shadow:inset 0 0 0 1px #1fae34;"></div>

<div class="a" style="left:255px;top:485px;width:734.5px;height:385.5px;border:1px solid #fff;box-sizing:border-box;"></div>
<div class="a" style="left:254px;top:484px;width:733.5px;height:384.5px;border:2px solid #a3a3a3;box-sizing:border-box;"></div>
<div class="a" style="left:264px;top:482px;width:320px;height:6px;background:#ececec;"></div>








<div class="a" style="left:488px;top:512px;width:488px;height:40px;background:#fff;box-sizing:border-box;border:2px solid #8cbdf5;border-bottom-color:#72a8e2;border-radius:2.5px;"></div>
<div class="a" style="left:492px;top:516px;width:82px;height:32px;background:#a9cdfc;"></div>
<div class="a" style="left:493.7px;top:533.2px;width:11.7px;height:2.3px;background:#000;"></div>

<div class="fld" style="left:489px;top:565px;width:486px;height:38px;"></div>

<div class="fld" style="left:489px;top:617px;width:486px;height:38px;"></div>

<div class="a" style="left:940px;top:666px;width:35px;height:41px;background:#fff;border-radius:0 9px 9px 0;box-shadow:0 1px 2px rgba(0,0,0,.25);"></div>
<div class="fld" style="left:489px;top:669px;width:453px;height:40px;border-right:none;"></div>

<svg style="left:945px;top:673px" width="18" height="26"><path d="M3.2 9.2L9 3.5L14.8 9.2M3.2 16.8L9 22.5L14.8 16.8" fill="none" stroke="#222" stroke-width="2.6" stroke-linecap="round" stroke-linejoin="round"/></svg>
<div class="fld" style="left:489px;top:721px;width:486px;height:38px;"></div>

<div class="fld" style="left:489px;top:773px;width:456px;height:38px;"></div>

<div class="a" style="left:954px;top:772px;width:26px;height:40px;background:linear-gradient(#fff 0,#fff 42%,#ededed 49%,#dcdcdc 50%,#f6f6f6 56%,#fff 70%);border-radius:11px;box-shadow:0 0 0 1px rgba(0,0,0,.07),0 1px 2px rgba(0,0,0,.25);"></div>
<svg style="left:958px;top:775px" width="18" height="34"><path d="M3 9.5L9 3.5L15 9.5M3 24.5L9 30.5L15 24.5" fill="none" stroke="#222" stroke-width="2.6" stroke-linecap="round" stroke-linejoin="round"/></svg>
<div class="a" style="left:496px;top:828px;width:28px;height:28px;border-radius:7px;background:linear-gradient(#3f98fc,#0f6ff3);box-shadow:0 1px 1px rgba(0,0,0,.2);"></div>
<svg style="left:496px;top:828px" width="28" height="28"><path d="M7 15L12 21L21 7.5" fill="none" stroke="#fff" stroke-width="3.4" stroke-linecap="round" stroke-linejoin="round"/></svg>
<div class="a" style="left:255px;top:911px;width:795.0px;height:92.5px;border:1px solid #fff;box-sizing:border-box;"></div>
<div class="a" style="left:254px;top:910px;width:794.0px;height:91.5px;border:2px solid #a3a3a3;box-sizing:border-box;"></div>
<div class="a" style="left:264px;top:908px;width:64px;height:6px;background:#ececec;"></div>

<div class="btn" style="left:282.5px;top:946.5px;width:301.0px;height:39px;border-radius:10px;"></div>
<div class="blue" style="left:547.9px;top:949.7px;"><svg style="left:0;top:0" width="32" height="32"><path d="M11.6 11.7L16.15 7.3L20.7 11.7M11.6 21.1L16.15 25.4L20.7 21.1" fill="none" stroke="#fff" stroke-width="2.8" stroke-linecap="round" stroke-linejoin="round"/></svg></div>
<div class="btn" style="left:616.5px;top:946.5px;width:239.2px;height:39px;border-radius:10px;"></div>
<div class="blue" style="left:820.1px;top:949.7px;"><svg style="left:0;top:0" width="32" height="32"><path d="M11.6 11.7L16.15 7.3L20.7 11.7M11.6 21.1L16.15 25.4L20.7 21.1" fill="none" stroke="#fff" stroke-width="2.8" stroke-linecap="round" stroke-linejoin="round"/></svg></div>
<div class="btn" style="left:888.7px;top:946.5px;width:120.8px;height:39px;border-radius:10px;"></div>
<div class="blue" style="left:973.9px;top:949.7px;"><svg style="left:0;top:0" width="32" height="32"><path d="M11.6 11.7L16.15 7.3L20.7 11.7M11.6 21.1L16.15 25.4L20.7 21.1" fill="none" stroke="#fff" stroke-width="2.8" stroke-linecap="round" stroke-linejoin="round"/></svg></div>



<div class="btn" style="left:414.7px;top:1036.5px;width:131.0px;height:39px;"></div>
<div class="btn" style="left:594.7px;top:1036.5px;width:121.0px;height:39px;"></div>
<div class="btn" style="left:764.7px;top:1036.5px;width:142.8px;height:39px;"></div>



<svg style="left:0;top:0;will-change:transform;pointer-events:none" width="1762" height="1470" viewBox="0 0 1762 1470" font-family="Liberation Sans" text-rendering="geometricPrecision" font-kerning="none" xml:space="preserve"><text transform="translate(861.36 32) scale(0.9830 1)" font-size="27.76" font-weight="bold" fill="#a9abaa" stroke="#a9abaa" stroke-width="0.15">Unidata IDV - Map View - One Pane</text><text transform="translate(15.11 84) scale(0.9976 1)" font-size="30.38" fill="#000" stroke="#000" stroke-width="0.40">File</text><text transform="translate(98.83 84) scale(1.0296 1)" font-size="30.38" fill="#000" stroke="#000" stroke-width="0.40">Edit</text><text transform="translate(186.86 84) scale(0.9802 1)" font-size="30.38" fill="#000" stroke="#000" stroke-width="0.40">Displays</text><text transform="translate(335.01 84) scale(0.9598 1)" font-size="30.38" fill="#000" stroke="#000" stroke-width="0.40">Data</text><text transform="translate(433.04 84) scale(0.9878 1)" font-size="30.38" fill="#000" stroke="#000" stroke-width="0.40">Bundles</text><text transform="translate(577.30 84) scale(1.0330 1)" font-size="30.38" fill="#000" stroke="#000" stroke-width="0.40">Tools</text><text transform="translate(689.03 84) scale(1.0308 1)" font-size="30.38" fill="#000" stroke="#000" stroke-width="0.40">History</text><text transform="translate(820.69 84) scale(1.0066 1)" font-size="30.38" fill="#000" stroke="#000" stroke-width="0.40">Help</text><text transform="translate(714.34 136) scale(1.0674 1)" font-size="23.11" fill="#000" stroke="#000" stroke-width="0.25">worktest</text><text transform="translate(74.37 222) scale(1.0008 1)" font-size="29.07" fill="#000" stroke="#000" stroke-width="0.40">View</text><text transform="translate(172.96 222) scale(1.0650 1)" font-size="29.07" fill="#000" stroke="#000" stroke-width="0.40">Projections</text><text transform="translate(1115.62 210) scale(1.0818 1)" font-size="20.35" fill="#000" stroke="#000" stroke-width="0.25">1999-09-20 19:54:00Z</text><text transform="translate(1694.68 314) scale(0.9731 1)" font-size="21.37" font-weight="bold" fill="#000" stroke="#000" stroke-width="0.15">World</text><text transform="translate(1760.12 314) scale(1.0000 1)" font-size="21.37" font-weight="bold" fill="#000" stroke="#000" stroke-width="0.15">C</text><text transform="translate(1693.49 444) scale(1.0239 1)" font-size="20.64" font-weight="bold" fill="#000" stroke="#000" stroke-width="0.15">Layout</text><text transform="translate(1694.24 470) scale(1.1366 1)" font-size="20.35" font-weight="bold" fill="#000" stroke="#000" stroke-width="0.15">Tempe</text><text transform="translate(1694.65 526) scale(1.2933 1)" font-size="20.79" font-weight="bold" fill="#000" stroke="#000" stroke-width="0.15">-90</text><text transform="translate(26.11 1470) scale(1.0000 1)" font-size="27.62" fill="#000" stroke="#000" stroke-width="0.40">22:24:48 GMT</text><text transform="translate(216.79 1470) scale(1.0656 1)" font-size="27.62" fill="#000" stroke="#000" stroke-width="0.40">Latitude:</text><text transform="translate(343.84 1470) scale(1.0439 1)" font-size="27.62" fill="#000" stroke="#000" stroke-width="0.40">44.2</text><text transform="translate(422.60 1470) scale(1.0611 1)" font-size="27.62" fill="#000" stroke="#000" stroke-width="0.40">Longitude:</text><text transform="translate(574.14 1470) scale(1.0502 1)" font-size="27.62" fill="#000" stroke="#000" stroke-width="0.40">8.2</text><text transform="translate(645.94 1470) scale(1.0649 1)" font-size="27.62" fill="#000" stroke="#000" stroke-width="0.40">Altitude: 271.1 m</text><text transform="translate(573.62 440) scale(0.9933 1)" font-size="27.18" font-weight="bold" fill="#464646" stroke="#464646" stroke-width="0.15">Vertical Scale</text><text transform="translate(268.88 496) scale(0.9869 1)" font-size="27.18" fill="#000" stroke="#000" stroke-width="0.40">Vertical Scale Parameters</text><text transform="translate(343.71 542) scale(1.0051 1)" font-size="27.76" fill="#000" stroke="#000" stroke-width="0.40">Min Value:</text><text transform="translate(337.03 594) scale(0.9973 1)" font-size="27.76" fill="#000" stroke="#000" stroke-width="0.40">Max Value:</text><text transform="translate(336.24 646) scale(1.0262 1)" font-size="27.76" fill="#000" stroke="#000" stroke-width="0.40">Axis Label:</text><text transform="translate(398.98 698) scale(1.0817 1)" font-size="27.76" fill="#000" stroke="#000" stroke-width="0.40">Units:</text><text transform="translate(260.14 750) scale(1.0345 1)" font-size="27.76" fill="#000" stroke="#000" stroke-width="0.40">Major Increment:</text><text transform="translate(280.56 802) scale(1.0721 1)" font-size="27.76" fill="#000" stroke="#000" stroke-width="0.40">Minor Division:</text><text transform="translate(382.37 850) scale(1.0422 1)" font-size="27.76" fill="#000" stroke="#000" stroke-width="0.40">Visible:</text><text transform="translate(509.43 542) scale(1.0334 1)" font-size="27.62" fill="#000" stroke="#000" stroke-width="0.40">1000</text><text transform="translate(492.30 594) scale(1.0583 1)" font-size="27.33" fill="#000" stroke="#000" stroke-width="0.40">1000</text><text transform="translate(492.44 646) scale(1.1071 1)" font-size="27.33" fill="#000" stroke="#000" stroke-width="0.40">Altitude</text><text transform="translate(491.79 698) scale(1.1072 1)" font-size="27.33" fill="#000" stroke="#000" stroke-width="0.40">m</text><text transform="translate(492.85 750) scale(1.0541 1)" font-size="27.33" fill="#000" stroke="#000" stroke-width="0.40">500.0</text><text transform="translate(925.93 802) scale(0.8997 1)" font-size="27.33" fill="#000" stroke="#000" stroke-width="0.40">1</text><text transform="translate(266.68 922) scale(1.0918 1)" font-size="25.87" fill="#000" stroke="#000" stroke-width="0.25">Font</text><text transform="translate(304.59 976) scale(1.0872 1)" font-size="27.04" fill="#000" stroke="#000" stroke-width="0.40">Default</text><text transform="translate(639.03 976) scale(1.0224 1)" font-size="27.04" fill="#000" stroke="#000" stroke-width="0.40">Plain</text><text transform="translate(913.41 976) scale(1.0130 1)" font-size="27.04" fill="#000" stroke="#000" stroke-width="0.40">12</text><text transform="translate(444.44 1064) scale(1.0447 1)" font-size="27.33" fill="#000" stroke="#000" stroke-width="0.40">Apply</text><text transform="translate(636.34 1064) scale(0.8976 1)" font-size="27.33" fill="#000" stroke="#000" stroke-width="0.40">OK</text><text transform="translate(793.62 1064) scale(0.9933 1)" font-size="27.33" fill="#000" stroke="#000" stroke-width="0.40">Cancel</text></svg>
</body></html>
